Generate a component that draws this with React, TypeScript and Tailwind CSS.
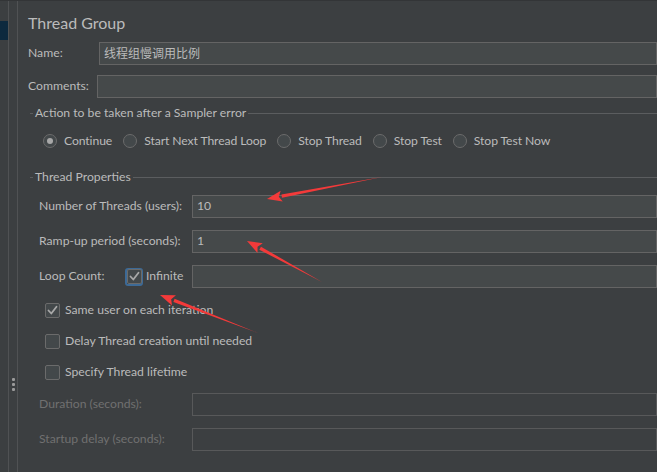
import React from 'react';

const font = { fontFamily: 'Lato, "Noto Sans CJK SC", sans-serif' };

const Radio = ({ label, checked }: { label: string; checked?: boolean }) => (
  <div className="flex items-center whitespace-nowrap">
    <span className="w-[14px] h-[14px] rounded-full border border-[#6b6b6b] bg-[#43484a] flex items-center justify-center shrink-0">
      {checked && <span className="w-[6px] h-[6px] rounded-full bg-[#a8a8a8]" />}
    </span>
    <span className="ml-[7px] tracking-[-0.1px]">{label}</span>
  </div>
);

const Check = ({ checked }: { checked?: boolean }) => (
  <span className="w-[15px] h-[15px] shrink-0 rounded-[2px] border border-[#6b6b6b] bg-[#43484a] flex items-center justify-center">
    {checked && (
      <svg width="11" height="11" viewBox="0 0 11 11" fill="none">
        <path d="M1.5 5.5 L4.3 8.5 L9.5 1.8" stroke="#a9a9a9" strokeWidth="1.8" strokeLinecap="round" strokeLinejoin="round" />
      </svg>
    )}
  </span>
);

const Legend = ({ text }: { text: string }) => (
  <div className="flex items-center h-[16px] ml-[2px] whitespace-nowrap">
    <div className="w-[3px] h-px bg-[#5b5d5f]" />
    <span className="ml-[2px] mr-[2px]">{text}</span>
    <div className="flex-1 h-px bg-[#5b5d5f]" />
  </div>
);

const Field = ({ label, value, disabled }: { label: string; value?: string; disabled?: boolean }) => (
  <div className="flex items-center h-[23px] pl-[11px]">
    <span className={`w-[153px] shrink-0 whitespace-nowrap ${disabled ? 'text-[#707070]' : ''}`}>{label}</span>
    <div
      className={`flex-1 h-full border flex items-center pl-[4px] ${
        disabled ? 'border-[#58595a] bg-[#3c3f41]' : 'border-[#646464] bg-[#45494a]'
      }`}
    >
      {value}
    </div>
  </div>
);

const Arrow = ({ x1, y1, x2, y2 }: { x1: number; y1: number; x2: number; y2: number }) => {
  const dx = x2 - x1;
  const dy = y2 - y1;
  const len = Math.hypot(dx, dy);
  const ux = dx / len;
  const uy = dy / len;
  const nx = -uy;
  const ny = ux;
  const hl = 15;
  const hw = 5.5;
  const bx = x2 - ux * hl;
  const by = y2 - uy * hl;
  const head = `${x2},${y2} ${bx + nx * hw},${by + ny * hw} ${bx + ux * 3},${by + uy * 3} ${bx - nx * hw},${by - ny * hw}`;
  const shaft = `${x1},${y1} ${bx + nx * 1.7},${by + ny * 1.7} ${bx - nx * 1.7},${by - ny * 1.7}`;
  return (
    <g fill="#f33a3a">
      <polygon points={shaft} />
      <polygon points={head} />
    </g>
  );
};

export default function App() {
  return (
    <div className="relative w-[657px] h-[472px] bg-[#3c3f41] text-[#bbbbbb] text-[12.2px] flex overflow-hidden" style={font}>
      <div className="absolute top-0 left-0 right-0 h-px bg-[#333537]" />
      <div className="w-[8px]">
        <div className="mt-[21px] h-[19px] bg-[#0d293e]" />
      </div>
      <div className="w-px bg-[#505254]" />
      <div className="w-[8px] flex flex-col items-center pt-[378px] gap-[2px]">
        <span className="w-[3px] h-[3px] bg-[#9a9a9a] rounded-[1px]" />
        <span className="w-[3px] h-[3px] bg-[#9a9a9a] rounded-[1px]" />
        <span className="w-[3px] h-[3px] bg-[#9a9a9a] rounded-[1px]" />
      </div>
      <div className="w-px bg-[#505254]" />

      <div className="flex-1 pl-[10px] flex flex-col">
        <div className="mt-[13px] h-[20px] flex items-center text-[16px]">Thread Group</div>

        <div className="mt-[9px] flex items-center h-[23px]">
          <span className="w-[71px] shrink-0">Name:</span>
          <div className="flex-1 h-full border border-[#646464] bg-[#45494a] flex items-center pl-[4px] text-[12px]">线程组慢调用比例</div>
        </div>

        <div className="mt-[10px] flex items-center h-[23px]">
          <span className="w-[69px] shrink-0">Comments:</span>
          <div className="flex-1 h-full border border-[#646464] bg-[#45494a]" />
        </div>

        <div className="mt-[7px]">
          <Legend text="Action to be taken after a Sampler error" />
        </div>

        <div className="mt-[12px] h-[16px] flex items-center pl-[15px] gap-[11px]">
          <Radio label="Continue" checked />
          <Radio label="Start Next Thread Loop" />
          <Radio label="Stop Thread" />
          <Radio label="Stop Test" />
          <Radio label="Stop Test Now" />
        </div>

        <div className="mt-[20px]">
          <Legend text="Thread Properties" />
        </div>

        <div className="mt-[10px] flex flex-col gap-[12px]">
          <Field label="Number of Threads (users):" value="10" />
          <Field label="Ramp-up period (seconds):" value="1" />
          <div className="flex items-center h-[23px] pl-[11px]">
            <span className="w-[86px] shrink-0">Loop Count:</span>
            <span className="w-[18px] h-[18px] shrink-0 rounded-[3px] border-2 border-[#3d6a96] flex items-center justify-center">
              <Check checked />
            </span>
            <span className="ml-[3px] w-[46px] shrink-0">Infinite</span>
            <div className="flex-1 h-full border border-[#646464] bg-[#45494a]" />
          </div>
        </div>

        <div className="mt-[14px] h-[16px] flex items-center pl-[17px]">
          <Check checked />
          <span className="ml-[5px]">Same user on each iteration</span>
        </div>
        <div className="mt-[15px] h-[16px] flex items-center pl-[17px]">
          <Check />
          <span className="ml-[5px]">Delay Thread creation until needed</span>
        </div>
        <div className="mt-[15px] h-[16px] flex items-center pl-[17px]">
          <Check />
          <span className="ml-[5px]">Specify Thread lifetime</span>
        </div>

        <div className="mt-[13px] flex flex-col gap-[12px]">
          <Field label="Duration (seconds):" disabled />
          <Field label="Startup delay (seconds):" disabled />
        </div>
      </div>

      <svg className="absolute inset-0 pointer-events-none" width="657" height="472">
        <Arrow x1={382} y1={177} x2={267} y2={199} />
        <Arrow x1={322} y1={282} x2={247} y2={241} />
        <Arrow x1={258} y1={333} x2={160} y2={295} />
      </svg>
    </div>
  );
}
